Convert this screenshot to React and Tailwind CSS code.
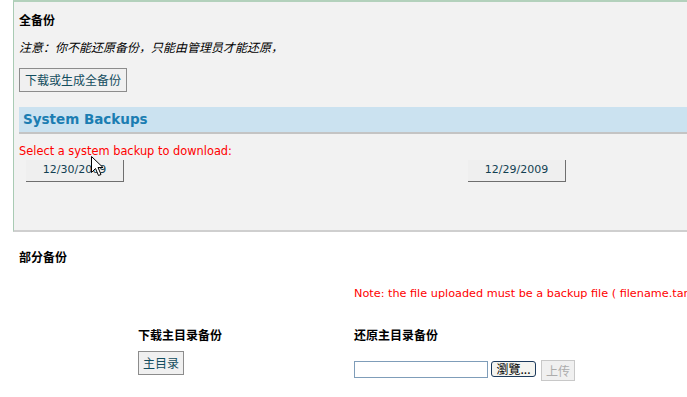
const cjk = "font-['SimSun','Noto_Sans_CJK_SC',sans-serif]";
const latin = "font-['DejaVu_Sans','Noto_Sans_CJK_SC',sans-serif]";

function Cursor() {
  return (
    <svg className="absolute left-[91px] top-[156px]" width="13" height="21" viewBox="0 0 13 21">
      <path d="M0.5 0.5 L0.5 16.5 L4.5 12.5 L7.5 19.5 L10 18.5 L7 11.5 L12 11.5 Z" fill="#fff" stroke="#000" strokeWidth="1" strokeLinejoin="miter" />
    </svg>
  );
}

export default function App() {
  return (
    <div className={`relative w-[687px] h-[397px] overflow-hidden bg-white ${cjk}`}>
      {/* full backup panel */}
      <div className="ml-[13px] h-[232px] bg-[#f2f2f2] border-l border-t-2 border-b-2 border-l-[#a9cbb4] border-t-[#b3d1bc] border-b-[#cfcfcf] pl-[5px] pt-[10px]">
        <div className="h-[16px] leading-[16px] text-[12px] font-bold text-black">全备份</div>
        <div className="mt-[11px] h-[16px] leading-[16px] text-[12px] italic text-black">
          注意：你不能还原备份，只能由管理员才能还原，
        </div>
        <button className="mt-[13px] h-[24px] px-[5px] bg-[#f0f0f0] border border-[#8c8c8c] text-[12px] text-[#134d5e] leading-none">
          下载或生成全备份
        </button>
        <div className="mt-[15px] h-[27px] bg-[#cbe2f0] border-b-2 border-[#c4c4c4] pl-[4px] flex items-center">
          <span className={`${latin} text-[13.5px] font-bold text-[#1b7db2]`}>System Backups</span>
        </div>
        <div className={`${latin} mt-[9px] h-[16px] leading-[16px] text-[11.4px] text-[#ff0000]`}>
          Select a system backup to download:
        </div>
        <div className="mt-[1px] flex">
          <button className={`${latin} ml-[7px] w-[98px] h-[22px] bg-[#efefef] border-r border-b border-[#6f6f6f] text-[11px] text-[#123f52]`}>
            12/30/2009
          </button>
          <button className={`${latin} ml-[344px] w-[98px] h-[22px] bg-[#efefef] border-r border-b border-[#6f6f6f] text-[11px] text-[#123f52]`}>
            12/29/2009
          </button>
        </div>
      </div>

      {/* partial backup */}
      <div className="pl-[19px] mt-[17px] h-[16px] leading-[16px] text-[12px] font-bold text-black">部分备份</div>
      <div className={`${latin} pl-[354px] mt-[21px] h-[16px] leading-[16px] text-[11.25px] text-[#ff0000] whitespace-nowrap`}>
        Note: the file uploaded must be a backup file ( filename.tar.gz )
      </div>
      <div className="flex mt-[25px]">
        <div className="ml-[138px] w-[216px]">
          <div className="h-[16px] leading-[16px] text-[12px] font-bold text-black">下载主目录备份</div>
          <button className="mt-[8px] h-[24px] px-[4px] bg-[#f0f0f0] border border-[#8c8c8c] text-[12px] text-[#134d5e] leading-none">
            主目录
          </button>
        </div>
        <div>
          <div className="h-[16px] leading-[16px] text-[12px] font-bold text-black">还原主目录备份</div>
          <div className="mt-[18px] flex items-start">
            <div className="w-[134px] h-[17px] bg-white border border-[#7f9db9]" />
            <button className="ml-[3px] w-[45px] h-[16px] rounded-[3px] bg-[#f4f4f0] border border-[#1c3a5c] text-[12px] text-black leading-none flex items-center justify-center">
              瀏覽...
            </button>
            <button className="ml-[5px] -mt-[1px] w-[34px] h-[21px] bg-[#f0f0f0] border border-[#c8c8c8] text-[12px] text-[#acacac] leading-none">
              上传
            </button>
          </div>
        </div>
      </div>

      <Cursor />
    </div>
  );
}
